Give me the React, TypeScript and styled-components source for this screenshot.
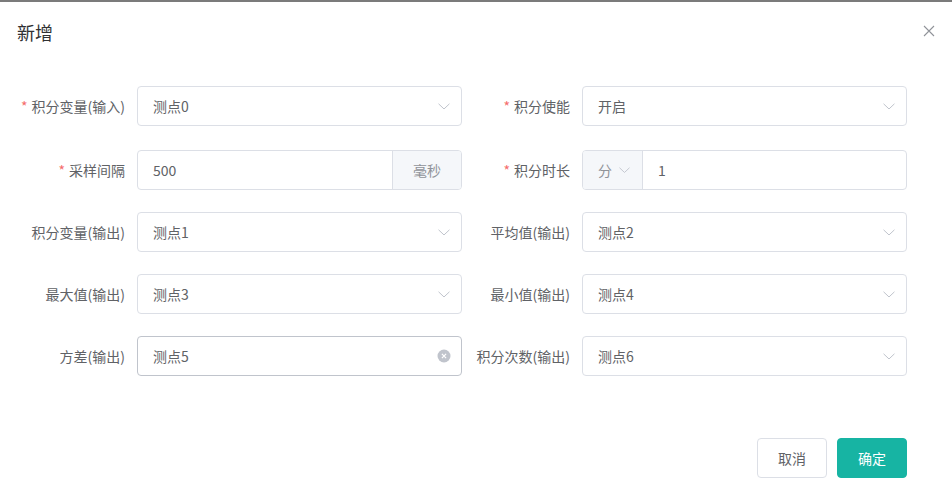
import React from "react";
import styled, { createGlobalStyle } from "styled-components";

const Global = createGlobalStyle`
  html, body { margin: 0; padding: 0; background: #fff; }
  body { font-family: "Microsoft YaHei", "Noto Sans CJK SC", "Liberation Sans", sans-serif; -webkit-font-smoothing: antialiased; }
  * { box-sizing: border-box; }
`;

const Dialog = styled.div`
  width: 952px;
  height: 493px;
  background: #fff;
  border-top: 2px solid #7b7b7b;
  display: flex;
  flex-direction: column;
`;

const Header = styled.div`
  display: flex;
  justify-content: space-between;
  align-items: flex-start;
  padding: 17px 18px 10px 17px;
`;

const Title = styled.span`
  font-size: 18px;
  line-height: 26px;
  color: #303133;
`;

const CloseBtn = styled.button`
  border: 0;
  background: none;
  padding: 0;
  margin-top: 6px;
  margin-right: -1px;
  width: 12px;
  height: 12px;
  display: flex;
  cursor: pointer;
`;

const Body = styled.div`
  padding: 31px 20px 30px 20px;
  display: grid;
  grid-template-columns: 442px 442px;
  column-gap: 3px;
`;

const Item = styled.div<{ $mb: number }>`
  display: flex;
  align-items: center;
  height: 40px;
  margin-bottom: ${(p) => p.$mb}px;
`;

const Label = styled.label`
  width: 117px;
  flex: none;
  padding-right: 12px;
  text-align: right;
  font-size: 14px;
  line-height: 40px;
  color: #606266;
  white-space: nowrap;
`;

const Star = styled.span`
  color: #f56c6c;
  margin-right: 4px;
`;

const Field = styled.div<{ $focus?: boolean }>`
  flex: 1;
  height: 40px;
  border: 1px solid ${(p) => (p.$focus ? "#c0c4cc" : "#dcdfe6")};
  border-radius: 4px;
  display: flex;
  align-items: center;
  padding: 0 ${(p) => (p.$focus ? 9 : 9)}px 0 15px;
  font-size: 14px;
  color: #606266;
  background: #fff;
`;

const Value = styled.span`
  flex: 1;
`;

const Group = styled.div`
  flex: 1;
  height: 40px;
  display: flex;
  border: 1px solid #dcdfe6;
  border-radius: 4px;
  overflow: hidden;
  font-size: 14px;
  color: #606266;
`;

const GroupInput = styled.div`
  flex: 1;
  display: flex;
  align-items: center;
  padding: 0 15px;
`;

const Append = styled.div`
  width: 69px;
  background: #f5f7fa;
  border-left: 1px solid #dcdfe6;
  color: #909399;
  display: flex;
  align-items: center;
  justify-content: center;
`;

const Prepend = styled.div`
  width: 60px;
  background: #f5f7fa;
  border-right: 1px solid #dcdfe6;
  color: #909399;
  display: flex;
  align-items: center;
  padding-left: 15px;
  gap: 7px;
`;

const Footer = styled.div`
  margin-top: auto;
  display: flex;
  justify-content: flex-end;
  gap: 10px;
  padding: 0 45px 15px 0;
`;

const Button = styled.button<{ $primary?: boolean }>`
  height: 40px;
  width: 70px;
  border-radius: 4px;
  font-family: inherit;
  font-size: 14px;
  border: 1px solid ${(p) => (p.$primary ? "#17b4a3" : "#dcdfe6")};
  background: ${(p) => (p.$primary ? "#17b4a3" : "#fff")};
  color: ${(p) => (p.$primary ? "#fff" : "#606266")};
  cursor: pointer;
`;

const IconSlot = styled.span`
  width: 14px;
  height: 14px;
  display: flex;
  align-items: center;
  justify-content: center;
  margin-right: 1px;
`;

const Chevron = ({ size = 12 }: { size?: number }) => (
  <svg width={size} height={size * 0.58} viewBox="0 0 12 7" fill="none">
    <path d="M0.5 0.8 L6 6 L11.5 0.8" stroke="#c0c4cc" strokeWidth="1" />
  </svg>
);

const ClearIcon = () => (
  <svg width="14" height="14" viewBox="0 0 14 14">
    <circle cx="7" cy="7" r="6.5" fill="#c0c4cc" />
    <path d="M4.9 4.9 L9.1 9.1 M9.1 4.9 L4.9 9.1" stroke="#fff" strokeWidth="1.2" />
  </svg>
);

const Select = ({ value, focus, clear }: { value: string; focus?: boolean; clear?: boolean }) => (
  <Field $focus={focus}>
    <Value>{value}</Value>
    <IconSlot>{clear ? <ClearIcon /> : <Chevron />}</IconSlot>
  </Field>
);

const FormItem = ({ label, required, children, mb = 22 }: { label: string; required?: boolean; children: React.ReactNode; mb?: number }) => (
  <Item $mb={mb}>
    <Label>
      {required && <Star>*</Star>}
      {label}
    </Label>
    {children}
  </Item>
);

export default function App() {
  return (
    <>
      <Global />
      <Dialog>
        <Header>
          <Title>新增</Title>
          <CloseBtn aria-label="关闭">
            <svg width="12" height="12" viewBox="0 0 12 12">
              <path d="M1 1 L11 11 M11 1 L1 11" stroke="#909399" strokeWidth="1.1" />
            </svg>
          </CloseBtn>
        </Header>
        <Body>
          <FormItem label="积分变量(输入)" required mb={24}>
            <Select value="测点0" />
          </FormItem>
          <FormItem label="积分使能" required mb={24}>
            <Select value="开启" />
          </FormItem>
          <FormItem label="采样间隔" required>
            <Group>
              <GroupInput>500</GroupInput>
              <Append>毫秒</Append>
            </Group>
          </FormItem>
          <FormItem label="积分时长" required>
            <Group>
              <Prepend>
                分 <Chevron size={11} />
              </Prepend>
              <GroupInput>1</GroupInput>
            </Group>
          </FormItem>
          <FormItem label="积分变量(输出)">
            <Select value="测点1" />
          </FormItem>
          <FormItem label="平均值(输出)">
            <Select value="测点2" />
          </FormItem>
          <FormItem label="最大值(输出)">
            <Select value="测点3" />
          </FormItem>
          <FormItem label="最小值(输出)">
            <Select value="测点4" />
          </FormItem>
          <FormItem label="方差(输出)" mb={0}>
            <Select value="测点5" focus clear />
          </FormItem>
          <FormItem label="积分次数(输出)" mb={0}>
            <Select value="测点6" />
          </FormItem>
        </Body>
        <Footer>
          <Button>取消</Button>
          <Button $primary>确定</Button>
        </Footer>
      </Dialog>
    </>
  );
}
